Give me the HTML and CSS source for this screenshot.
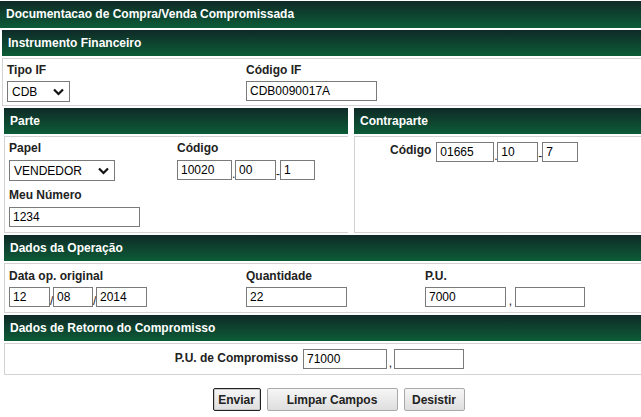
FILE: index.html
```html
<!DOCTYPE html>
<html lang="pt">
<head>
    <meta charset="UTF-8">
    <title>Documentacao de Compra/Venda Compromissada</title>
    <link rel="stylesheet" href="styles.css">
</head>
<body>
    <div class="page">
        <div class="title-bar">Documentacao de Compra/Venda Compromissada</div>

        <div class="content">
            <div class="section instr">
                <div class="section-head">Instrumento Financeiro</div>
                <div class="section-body cols">
                    <div class="field">
                        <label>Tipo IF</label>
                        <div class="select w-tipo">CDB
                            <svg width="11" height="8" viewBox="0 0 11 8"><path d="M1 1.5 L5.5 6 L10 1.5" fill="none" stroke="#111" stroke-width="2.2"/></svg>
                        </div>
                    </div>
                    <div class="field">
                        <label>Código IF</label>
                        <input class="w-codif" value="CDB0090017A">
                    </div>
                </div>
            </div>

            <div class="split">
                <div class="section parte">
                    <div class="section-head">Parte</div>
                    <div class="section-body parte-body">
                        <div class="field">
                            <label>Papel</label>
                            <div class="select w-papel">VENDEDOR
                                <svg width="11" height="8" viewBox="0 0 11 8"><path d="M1 1.5 L5.5 6 L10 1.5" fill="none" stroke="#111" stroke-width="2.2"/></svg>
                            </div>
                        </div>
                        <div class="field">
                            <label>Código</label>
                            <div class="inline">
                                <input class="w55" value="10020"><span class="sep">.</span><input class="w41" value="00"><span class="sep s4">-</span><input class="w35" value="1">
                            </div>
                        </div>
                        <div class="field">
                            <label>Meu Número</label>
                            <input class="w131" value="1234">
                        </div>
                    </div>
                </div>

                <div class="section contra">
                    <div class="section-head">Contraparte</div>
                    <div class="section-body contra-body">
                        <label class="side-label">Código</label>
                        <div class="inline">
                            <input class="w58" value="01665"><span class="sep">.</span><input class="w41" value="10"><span class="sep s4">-</span><input class="w36" value="7">
                        </div>
                    </div>
                </div>
            </div>

            <div class="section">
                <div class="section-head">Dados da Operação</div>
                <div class="section-body cols op-body">
                    <div class="field">
                        <label>Data op. original</label>
                        <div class="inline">
                            <input class="w41" value="12"><span class="sep">/</span><input class="w40" value="08"><span class="sep">/</span><input class="w51" value="2014">
                        </div>
                    </div>
                    <div class="field">
                        <label>Quantidade</label>
                        <input class="w101" value="22">
                    </div>
                    <div class="field">
                        <label>P.U.</label>
                        <div class="inline">
                            <input class="w81" value="7000"><span class="sep s9">,</span><input class="w70" value="">
                        </div>
                    </div>
                </div>
            </div>

            <div class="section">
                <div class="section-head">Dados de Retorno do Compromisso</div>
                <div class="section-body ret-body">
                    <label class="ret-label">P.U. de Compromisso</label>
                    <div class="inline">
                        <input class="w84" value="71000"><span class="sep s7">,</span><input class="w70" value="">
                    </div>
                </div>
            </div>
        </div>

        <div class="buttons">
            <button class="btn btn-focus w-enviar">Enviar</button>
            <button class="btn w-limpar">Limpar Campos</button>
            <button class="btn w-desistir">Desistir</button>
        </div>
    </div>
</body>
</html>
```

FILE: styles.css
```css
* {
    margin: 0;
    padding: 0;
    box-sizing: border-box;
    font-family: "Liberation Sans", Arial, sans-serif;
}

body {
    background: white;
    overflow: hidden;
}

.page {
    width: 677px;
}

.title-bar {
    margin-top: 1px;
    height: 27px;
    line-height: 27px;
    padding-left: 6px;
    color: white;
    font-size: 12px;
    font-weight: bold;
    background: linear-gradient(#0f2a27, #0c5c37);
}

.content {
    display: flex;
    flex-direction: column;
    gap: 2px;
    margin-top: 2px;
    padding-left: 2px;
}

.section-head {
    height: 26px;
    line-height: 26px;
    padding-left: 6px;
    color: white;
    font-size: 12px;
    font-weight: bold;
    background: linear-gradient(#0f2a27, #0c5c37);
}

.section-body {
    margin-top: 2px;
    border: 1px solid #d2d2d2;
    border-right: none;
    padding: 4px 0 4px 4px;
}

.section:not(.instr) {
    margin-left: 2px;
}

label {
    display: block;
    font-size: 12px;
    font-weight: bold;
    line-height: 14px;
    color: #222;
}

.field {
    display: flex;
    flex-direction: column;
    align-items: flex-start;
    gap: 4px;
}

.cols {
    display: grid;
    grid-template-columns: 239px 179px auto;
    height: 48px;
}

input, .select {
    height: 20px;
    border: 1px solid #7a7a7a;
    padding: 0 3px;
    font-size: 12px;
    color: #000;
    background: white;
    outline: none;
}

.select {
    height: 21px;
    display: flex;
    align-items: center;
    justify-content: space-between;
    padding: 0 5px 0 4px;
}

.inline {
    display: flex;
    align-items: flex-end;
}

.sep {
    width: 3px;
    font-size: 12px;
    line-height: 12px;
    text-align: center;
    color: #222;
}

.s4 { width: 4px; }
.s7 { width: 7px; }
.s9 { width: 9px; }

.w-tipo { width: 63px; }
.w-codif { width: 131px; }
.w-papel { width: 106px; }
.w35 { width: 35px; }
.w36 { width: 36px; }
.w40 { width: 40px; }
.w41 { width: 41px; }
.w51 { width: 51px; }
.w55 { width: 55px; }
.w58 { width: 58px; }
.w70 { width: 70px; }
.w81 { width: 81px; }
.w84 { width: 84px; }
.w101 { width: 101px; }
.w131 { width: 131px; }

.split {
    display: flex;
    gap: 6px;
}

.parte {
    width: 344px;
}

.contra {
    flex: 1;
    margin-left: 0 !important;
}

.parte-body {
    display: grid;
    grid-template-columns: 168px auto;
    row-gap: 6px;
    height: 97px;
    padding-top: 4px;
}

.parte-body .field {
    gap: 5px;
}

.contra-body {
    display: flex;
    align-items: flex-start;
    gap: 5px;
    height: 97px;
    padding: 5px 0 0 35px;
}

.side-label {
    margin-top: 1px;
}

.op-body {
    grid-template-columns: 237px 179px auto;
    height: 50px;
    padding-top: 5px;
}

.ret-body {
    display: flex;
    align-items: flex-start;
    gap: 5px;
    height: 32px;
    padding: 5px 0 0 0;
}

.ret-label {
    width: 293px;
    text-align: right;
    margin-top: 2px;
}

.buttons {
    display: flex;
    justify-content: center;
    gap: 6px;
    margin-top: 13px;
}

.btn {
    height: 23px;
    border: 1px solid #a9a9a9;
    border-radius: 2px;
    background: linear-gradient(#f6f6f6, #dedede);
    font-size: 12px;
    font-weight: bold;
    color: #222;
}

.btn-focus {
    border: 1px solid #222;
    box-shadow: inset 0 0 0 1px #c8c8c8;
}

.w-enviar { width: 48px; }
.w-limpar { width: 131px; }
.w-desistir { width: 61px; }
```
